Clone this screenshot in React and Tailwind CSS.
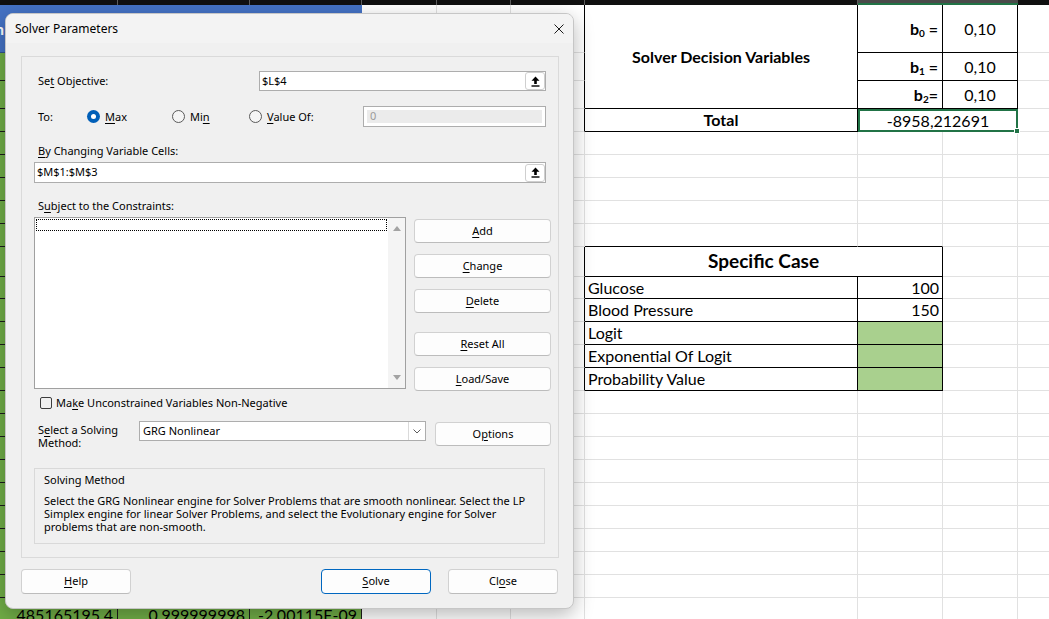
import React from "react";

// row heights of the visible sheet, starting under the 5px column header strip
const ROWS = [48, 28, 28, 23, 23, 23, 23, 23, 23, 30, 22, 23, 23, 23, 23, 23, 23, 23, 23, 23, 23, 23, 23, 23, 23];

const blackRight = (r, c) => {
  if (c === 5) return r <= 3 || (r >= 9 && r <= 14);
  if (c === 6) return r === 0 || r === 3 || (r >= 9 && r <= 14);
  if (c === 7) return r <= 2 || (r >= 10 && r <= 14);
  if (c === 8) return r <= 2;
  return false;
};

const blackBottom = (r, c) => {
  if (c === 6) return r === 0 || r === 3 || (r >= 8 && r <= 14);
  if (c === 7) return r <= 2 || r === 8 || (r >= 10 && r <= 14);
  if (c === 8) return r <= 2;
  return false;
};

const Sub = ({ children }) => <sub className="text-[10px] font-bold">{children}</sub>;

function cellContent(r, c) {
  if (r === 0 && c === 0) return <span className="-ml-[5px] font-bold text-white">n</span>;
  if (r === 24 && c === 0) return <span className="relative top-[3px]">485165195,4</span>;
  if (r === 24 && c === 1) return <span className="relative top-[3px]">0,999999998</span>;
  if (r === 24 && c === 2) return <span className="relative top-[3px]">-2,00115E-09</span>;
  if (r === 0 && c === 6) return <span className="font-bold">Solver Decision Variables</span>;
  if (c === 7 && r <= 2) {
    const n = ["0", "1", "2"][r];
    return (
      <span className="font-bold">
        b<Sub>{n}</Sub>{r === 2 ? "=" : " ="}
      </span>
    );
  }
  if (c === 8 && r <= 2) return "0,10";
  if (r === 3 && c === 6) return <span className="font-bold">Total</span>;
  if (r === 9 && c === 6) return <span className="text-[19px] font-bold">Specific Case</span>;
  if (c === 6 && r >= 10 && r <= 14) return ["Glucose", "Blood Pressure", "Logit", "Exponential Of Logit", "Probability Value"][r - 10];
  if (c === 7 && r === 10) return "100";
  if (c === 7 && r === 11) return "150";
  return null;
}

function SheetCell({ r, c }) {
  let cls = "flex min-w-0 overflow-hidden whitespace-nowrap border-r border-b ";
  if (c < 3) {
    cls += r === 0 ? "bg-[#4472c4] border-r-[#4472c4] border-b-[#2f528f] items-center " : "bg-[#70ad47] border-r-[#1c1c1c] border-b-[#1c1c1c] items-end justify-end pr-[4px] leading-[16px] ";
  } else {
    cls += blackRight(r, c) ? "border-r-black " : "border-r-[#e1e1e1] ";
    cls += blackBottom(r, c) ? "border-b-black " : "border-b-[#e1e1e1] ";
    cls += c === 7 && r >= 12 && r <= 14 ? "bg-[#a9d08e] " : "bg-white ";
    cls += "items-center ";
  }
  if (r === 0 && c === 6) cls += "row-span-3 justify-center ";
  if (c === 7 && r <= 2) cls += "justify-end pr-[4px] ";
  if (c === 8 && r <= 2) cls += "justify-center ";
  if (r === 3 && c === 6) cls += "justify-center ";
  if (r === 9 && c === 6) cls += "col-span-2 justify-center ";
  if (c === 6 && r >= 10 && r <= 14) cls += "pl-[3px] ";
  if (c === 7 && r >= 10 && r <= 14) cls += "justify-end pr-[3px] ";

  if (r === 3 && c === 7) {
    return (
      <div className="relative col-span-2 flex items-center justify-center border-2 border-[#217346] bg-white">
        -8958,212691
        <div className="absolute -right-[4px] -bottom-[4px] h-[6px] w-[6px] border border-white bg-[#217346]" />
      </div>
    );
  }
  return <div className={cls}>{cellContent(r, c)}</div>;
}

function Sheet() {
  const cells = [];
  for (let r = 0; r < ROWS.length; r++) {
    for (let c = 0; c < 10; c++) {
      if (c === 6 && (r === 1 || r === 2)) continue;
      if (c === 8 && r === 3) continue;
      if (c === 7 && r === 9) continue;
      cells.push(<SheetCell key={`${r}-${c}`} r={r} c={c} />);
    }
  }
  return (
    <div className="font-['Lato','Liberation_Sans',sans-serif] text-[16px] text-black">
      {/* column header strip, cut off at the top */}
      <div className="grid h-[5px] grid-cols-[118px_132px_112px_75px_74px_74px_273px_85px_75px_100px] bg-[#101010]">
        <div className="border-r border-[#5d5d5d]" />
        <div className="border-r border-[#5d5d5d]" />
        <div className="border-r border-[#5d5d5d]" />
        <div className="border-r border-[#5d5d5d]" />
        <div className="border-r border-[#5d5d5d]" />
        <div className="border-r border-[#5d5d5d]" />
        <div className="border-r border-[#5d5d5d]" />
        <div className="border-b-2 border-[#217346] bg-[#4a4a4a]" />
        <div className="border-b-2 border-[#217346] bg-[#4a4a4a]" />
        <div />
      </div>
      <div className="grid grid-cols-[118px_132px_112px_75px_74px_74px_273px_85px_75px_100px] grid-rows-[48px_28px_28px_23px_23px_23px_23px_23px_23px_30px_22px_23px_23px_23px_23px_23px_23px_23px_23px_23px_23px_23px_23px_23px_23px]">
        {cells}
      </div>
    </div>
  );
}

const U = ({ children }) => <span className="underline underline-offset-[2px]">{children}</span>;

function Btn({ children, className = "", primary = false }) {
  return (
    <div
      className={`flex shrink-0 items-center justify-center rounded-[4px] border bg-[#fdfdfd] text-[11px] ${
        primary ? "border-[#0067c0]" : "border-[#d1d1d1] border-b-[#bcbcbc]"
      } ${className}`}
    >
      {children}
    </div>
  );
}

const RefButton = () => (
  <div className="flex h-[18px] w-[20px] items-center justify-center rounded-[3px] border border-[#cfcfcf] bg-white">
    <svg width="9" height="11" viewBox="0 0 9 11">
      <path d="M4.5 0.5 L8.5 4.8 H5.8 V8 H3.2 V4.8 H0.5 Z" fill="#000" />
      <rect x="0.5" y="9.3" width="8" height="1.4" fill="#000" />
    </svg>
  </div>
);

const Radio = ({ checked }) =>
  checked ? (
    <div className="flex h-[13px] w-[13px] items-center justify-center rounded-full bg-[#005fb8]">
      <div className="h-[5px] w-[5px] rounded-full bg-white" />
    </div>
  ) : (
    <div className="h-[13px] w-[13px] rounded-full border border-[#5a5a5a] bg-[#f5f5f5]" />
  );

function SolverDialog() {
  return (
    <div className="absolute left-[5px] top-[13px] flex h-[596px] w-[569px] flex-col overflow-hidden rounded-[8px] border border-[#c6c6c6] bg-[#f0f0f0] font-['Noto_Sans','Liberation_Sans',sans-serif] text-[11px] text-black shadow-[0_6px_20px_rgba(0,0,0,0.28)]">
      <div className="flex h-[29px] items-center justify-between bg-[#f3f3f3] px-[9px]">
        <span className="text-[12px]">Solver Parameters</span>
        <svg width="10" height="10" viewBox="0 0 10 10">
          <path d="M0.5 0.5 L9.5 9.5 M9.5 0.5 L0.5 9.5" stroke="#1b1b1b" strokeWidth="1" />
        </svg>
      </div>

      <div className="flex flex-col px-[15px]">
        <div className="mt-[13px] flex h-[502px] w-[538px] flex-col border border-[#dadada] pl-[12px] pr-[6px]">
          {/* objective */}
          <div className="mt-[14px] flex h-[20px] items-center">
            <div className="w-[225px] pl-[4px]">Se<U>t</U> Objective:</div>
            <div className="flex h-[20px] w-[287px] items-center justify-between border border-[#adadad] bg-white pl-[2px]">
              <span>$L$4</span>
              <RefButton />
            </div>
          </div>

          {/* to */}
          <div className="mt-[15px] flex h-[21px] items-center">
            <div className="w-[53px] pl-[4px] pt-[1px]">To:</div>
            <div className="flex w-[85px] items-center gap-[5px]">
              <Radio checked />
              <span className="pt-[2px]"><U>M</U>ax</span>
            </div>
            <div className="flex w-[77px] items-center gap-[5px]">
              <Radio />
              <span className="pt-[2px]">Mi<U>n</U></span>
            </div>
            <div className="flex w-[114px] items-center gap-[5px]">
              <Radio />
              <span className="pt-[2px]"><U>V</U>alue Of:</span>
            </div>
            <div className="h-[21px] w-[183px] border border-[#adadad] bg-white p-[3px]">
              <div className="flex h-full items-center bg-[#ebebeb] pl-[3px] text-[#9a9a9a]">0</div>
            </div>
          </div>

          {/* changing cells */}
          <div className="mt-[17px] flex h-[14px] items-center pl-[4px]">
            <span><U>B</U>y Changing Variable Cells:</span>
          </div>
          <div className="mt-[4px] flex h-[21px] w-[512px] items-center justify-between border border-[#adadad] bg-white pl-[2px]">
            <span>$M$1:$M$3</span>
            <RefButton />
          </div>

          {/* constraints */}
          <div className="mt-[16px] flex h-[14px] items-center pl-[4px]">
            <span>S<U>u</U>bject to the Constraints:</span>
          </div>
          <div className="mt-[4px] flex h-[174px] gap-[8px]">
            <div className="flex h-[172px] w-[372px] shrink-0 border border-[#a0a0a0] bg-white">
              <div className="flex-1">
                <div className="ml-[1px] mt-[1px] h-[12px] w-[351px] border border-dotted border-black" />
              </div>
              <div className="flex w-[17px] flex-col items-center justify-between bg-[#f4f4f4] py-[8px]">
                <svg width="8" height="5" viewBox="0 0 8 5">
                  <path d="M4 0 L8 5 H0 Z" fill="#a3a3a3" />
                </svg>
                <svg width="8" height="5" viewBox="0 0 8 5">
                  <path d="M0 0 H8 L4 5 Z" fill="#a3a3a3" />
                </svg>
              </div>
            </div>
            <div className="flex w-[137px] shrink-0 flex-col">
              <Btn className="mt-[2px] h-[24px]"><span><U>A</U>dd</span></Btn>
              <Btn className="mt-[11px] h-[24px]"><span><U>C</U>hange</span></Btn>
              <Btn className="mt-[11px] h-[24px]"><span><U>D</U>elete</span></Btn>
              <Btn className="mt-[19px] h-[24px]"><span><U>R</U>eset All</span></Btn>
              <Btn className="mt-[11px] h-[24px]"><span><U>L</U>oad/Save</span></Btn>
            </div>
          </div>

          {/* non-negative */}
          <div className="mt-[6px] flex h-[12px] items-center">
            <div className="ml-[6px] h-[12px] w-[12px] rounded-[2px] border border-[#3c3c3c]" />
            <span className="ml-[4px]">Ma<U>k</U>e Unconstrained Variables Non-Negative</span>
          </div>

          {/* solving method */}
          <div className="mt-[12px] flex h-[25px]">
            <div className="w-[105px] shrink-0 pl-[4px] pt-[2px] leading-[13px]">
              S<U>e</U>lect a Solving
              <br />
              Method:
            </div>
            <div className="flex h-[20px] w-[287px] shrink-0 items-center border border-[#adadad] bg-white">
              <span className="flex-1 pl-[3px]">GRG Nonlinear</span>
              <div className="flex h-full w-[17px] items-center justify-center border-l border-[#dadada]">
                <svg width="8" height="5" viewBox="0 0 8 5">
                  <path d="M0.5 0.5 L4 4 L7.5 0.5" stroke="#5c5c5c" strokeWidth="1" fill="none" />
                </svg>
              </div>
            </div>
            <Btn className="ml-[9px] mt-[1px] h-[24px] w-[116px]"><span>O<U>p</U>tions</span></Btn>
          </div>

          <div className="mt-[22px] h-[76px] w-[511px] border border-[#d9d9d9] pl-[9px] pt-[4px] leading-[13px]">
            <div>Solving Method</div>
            <div className="mt-[8px] whitespace-nowrap">
              Select the GRG Nonlinear engine for Solver Problems that are smooth nonlinear. Select the LP
              <br />
              Simplex engine for linear Solver Problems, and select the Evolutionary engine for Solver
              <br />
              problems that are non-smooth.
            </div>
          </div>
        </div>

        <div className="mt-[11px] flex items-center justify-between">
          <Btn className="h-[25px] w-[110px]"><span><U>H</U>elp</span></Btn>
          <div className="flex gap-[17px]">
            <Btn primary className="h-[25px] w-[110px]"><span><U>S</U>olve</span></Btn>
            <Btn className="h-[25px] w-[110px]"><span>Cl<U>o</U>se</span></Btn>
          </div>
        </div>
      </div>
    </div>
  );
}

export default function App() {
  return (
    <div className="relative h-[619px] w-[1049px] overflow-hidden bg-white">
      <Sheet />
      <SolverDialog />
    </div>
  );
}
